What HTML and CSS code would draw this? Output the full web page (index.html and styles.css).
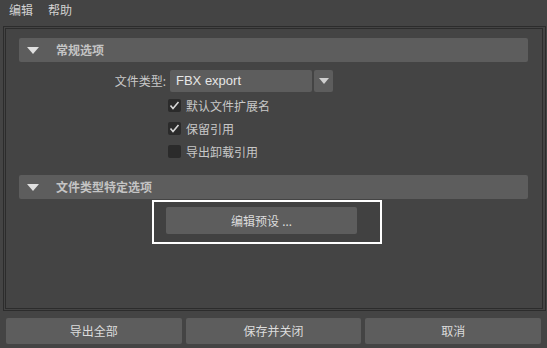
FILE: index.html
```html
<!DOCTYPE html>
<html lang="zh-CN">
<head>
    <meta charset="UTF-8">
    <title>导出选项</title>
    <link rel="stylesheet" href="styles.css">
</head>
<body>

<div class="menubar">
    <span>编辑</span>
    <span>帮助</span>
</div>

<div class="frame-outer">
    <div class="frame-inner">
        <!-- 常规选项 -->
        <div class="section-header">
            <span class="arrow"></span>
            <span class="section-title">常规选项</span>
        </div>

        <div class="form-row">
            <label class="form-label">文件类型:</label>
            <div class="combo">
                <div class="combo-value">FBX export</div>
                <div class="combo-btn"><span class="combo-arrow"></span></div>
            </div>
        </div>

        <div class="check-list">
            <div class="check-row">
                <span class="checkbox">
                    <svg width="13" height="13" viewBox="0 0 13 13"><polyline points="2.5,6.5 5,9.5 10.5,3" fill="none" stroke="#d8d8d8" stroke-width="1.6"/></svg>
                </span>
                <span>默认文件扩展名</span>
            </div>
            <div class="check-row">
                <span class="checkbox">
                    <svg width="13" height="13" viewBox="0 0 13 13"><polyline points="2.5,6.5 5,9.5 10.5,3" fill="none" stroke="#d8d8d8" stroke-width="1.6"/></svg>
                </span>
                <span>保留引用</span>
            </div>
            <div class="check-row">
                <span class="checkbox"></span>
                <span>导出卸载引用</span>
            </div>
        </div>

        <!-- 文件类型特定选项 -->
        <div class="section-header second">
            <span class="arrow"></span>
            <span class="section-title">文件类型特定选项</span>
        </div>

        <div class="highlight">
            <button class="btn preset">编辑预设 ...</button>
        </div>
    </div>
</div>

<div class="bottom-bar">
    <button class="btn">导出全部</button>
    <button class="btn">保存并关闭</button>
    <button class="btn">取消</button>
</div>

</body>
</html>
```

FILE: styles.css
```css
body {
    margin: 0;
    width: 547px;
    height: 348px;
    overflow: hidden;
    background-color: #444444;
    color: #c8c8c8;
    font-family: "Noto Sans", "Noto Sans CJK SC", sans-serif;
    font-size: 12px;
}
.menubar {
    height: 26px;
    line-height: 22px;
    padding-left: 9px;
    display: flex;
    gap: 15px;
    color: #d2d2d2;
}
.frame-outer {
    margin: 0 1px 0 3px;
    border: 1px solid #2c2c2c;
    padding: 1px 2px 1px 1px;
}
.frame-inner {
    border: 1px solid #2c2c2c;
    height: 279px;
}
/* 섹션 헤더 */
.section-header {
    margin: 9px 14px 0 13px;
    height: 24px;
    background-color: #5d5d5d;
    border-radius: 2px;
    display: flex;
    align-items: center;
}
.section-header.second {
    margin-top: 12px;
}
.arrow {
    width: 0;
    height: 0;
    margin-left: 8px;
    border-left: 6px solid transparent;
    border-right: 6px solid transparent;
    border-top: 7px solid #e0e0e0;
}
.section-title {
    margin-left: 17px;
    font-weight: bold;
    color: #c4c4c4;
}
.form-row {
    display: flex;
    align-items: center;
    margin-top: 8px;
    height: 22px;
}
.form-label {
    width: 160px;
    text-align: right;
    margin-right: 4px;
}
.combo {
    display: flex;
    gap: 2px;
    height: 22px;
}
.combo-value {
    width: 136px;
    padding-left: 6px;
    background-color: #5d5d5d;
    border-radius: 2px;
    color: #e6e6e6;
    font-family: "Liberation Sans", "Noto Sans CJK SC", sans-serif;
    font-size: 13px;
    line-height: 22px;
}
.combo-btn {
    width: 19px;
    background-color: #5d5d5d;
    border-radius: 2px;
    display: flex;
    align-items: center;
    justify-content: center;
}
.combo-arrow {
    width: 0;
    height: 0;
    border-left: 5px solid transparent;
    border-right: 5px solid transparent;
    border-top: 6px solid #cfcfcf;
}
.check-list {
    margin-top: 2px;
}
.check-row {
    display: flex;
    align-items: center;
    height: 23px;
    padding-left: 162px;
    gap: 5px;
}
.checkbox {
    width: 13px;
    height: 13px;
    background-color: #2b2b2b;
    border-radius: 2px;
    display: block;
}
.checkbox svg {
    display: block;
}
.highlight {
    margin: 1px 0 0 146px;
    width: 191px;
    border: 2px solid #ffffff;
    padding: 5px 23px 8px 12px;
    background-color: #414141;
}
.btn {
    border: none;
    border-radius: 2px;
    background-color: #5d5d5d;
    color: #dcdcdc;
    font-family: "Noto Sans", "Noto Sans CJK SC", sans-serif;
    font-size: 12px;
    padding: 0;
    cursor: pointer;
}
.btn.preset {
    display: block;
    width: 191px;
    height: 27px;
}
/* 하단 버튼 */
.bottom-bar {
    display: flex;
    gap: 4px;
    padding: 0 6px;
    margin-top: 7px;
}
.bottom-bar .btn {
    flex: 1;
    height: 26px;
}
```
